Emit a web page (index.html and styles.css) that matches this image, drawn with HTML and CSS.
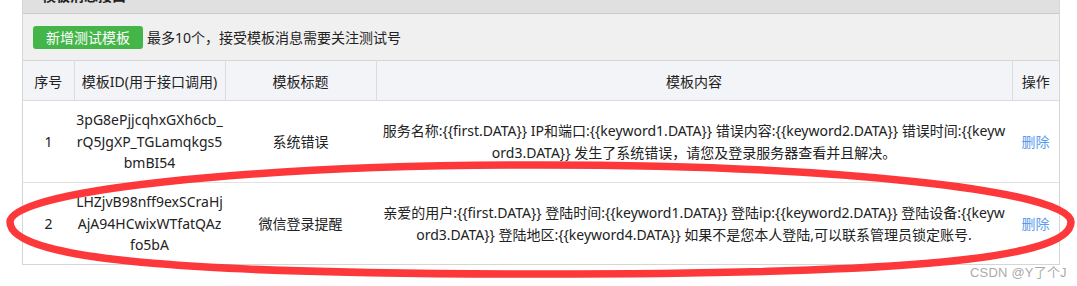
FILE: index.html
```html
<!DOCTYPE html>
<html lang="zh-CN">
<head>
<meta charset="utf-8">
<title>模板消息接口</title>
<link rel="stylesheet" href="styles.css">
</head>
<body>
<div class="page">
  <div class="panel">
    <div class="panel-title">模板消息接口</div>
    <div class="toolbar">
      <button class="btn-add" type="button">新增测试模板</button>
      <span class="tip">最多10个，接受模板消息需要关注测试号</span>
    </div>
    <table class="tpl-table">
      <colgroup>
        <col class="c-no">
        <col class="c-id">
        <col class="c-title">
        <col class="c-content">
        <col class="c-op">
      </colgroup>
      <thead>
        <tr>
          <th>序号</th>
          <th>模板ID(用于接口调用)</th>
          <th>模板标题</th>
          <th>模板内容</th>
          <th>操作</th>
        </tr>
      </thead>
      <tbody>
        <tr>
          <td>1</td>
          <td class="id">3pG8ePjjcqhxGXh6cb_<br>rQ5JgXP_TGLamqkgs5<br>bmBI54</td>
          <td>系统错误</td>
          <td class="content">服务名称:{{first.DATA}} IP和端口:{{keyword1.DATA}} 错误内容:{{keyword2.DATA}} 错误时间:{{keyw<br>ord3.DATA}} 发生了系统错误，请您及登录服务器查看并且解决。</td>
          <td><a class="del" href="#">删除</a></td>
        </tr>
        <tr>
          <td>2</td>
          <td class="id">LHZjvB98nff9exSCraHj<br>AjA94HCwixWTfatQAz<br>fo5bA</td>
          <td>微信登录提醒</td>
          <td class="content">亲爱的用户:{{first.DATA}} 登陆时间:{{keyword1.DATA}} 登陆ip:{{keyword2.DATA}} 登陆设备:{{keyw<br>ord3.DATA}} 登陆地区:{{keyword4.DATA}} 如果不是您本人登陆,可以联系管理员锁定账号.</td>
          <td><a class="del" href="#">删除</a></td>
        </tr>
      </tbody>
    </table>
  </div>

  <svg class="mark" width="1077" height="286" viewBox="0 0 1077 286">
    <path d="M10 222 C10 190.5 247.7 165 541 165 C834.3 165 1071 190.5 1071 222 C1071 263.6 859 274 541 274 C223 274 10 263.6 10 222 Z" fill="none" stroke="#fd383b" stroke-width="7.5"/>
  </svg>
  <div class="watermark">CSDN @Y了个J</div>
</div>
</body>
</html>
```

FILE: styles.css
```css
html, body {
  margin: 0;
  padding: 0;
  background: #ffffff;
}

body {
  font-family: "Noto Sans", "Noto Sans CJK SC", sans-serif;
  font-size: 14px;
  color: #333333;
  overflow: hidden;
}

.page {
  position: relative;
  width: 1077px;
  height: 286px;
  overflow: hidden;
}

.panel {
  box-sizing: border-box;
  width: 1038px;
  margin: -21px 0 0 22px;
  border: 1px solid #d6d6d6;
  border-top: none;
  background: #ffffff;
}

.panel-title {
  height: 34px;
  line-height: 34px;
  padding-left: 19px;
  background: #e0e0e0;
  border-bottom: 1px solid #cccccc;
  font-weight: bold;
  color: #222222;
}

.toolbar {
  display: flex;
  align-items: center;
  height: 46px;
  padding: 0 10px;
  background: #f0f0f0;
}

.btn-add {
  height: 23px;
  padding: 0 13px;
  margin-right: 4px;
  border: none;
  border-radius: 3px;
  background: #44b549;
  color: #ffffff;
  font-family: inherit;
  font-size: 14px;
  line-height: 23px;
}

.tip {
  color: #222222;
}

.tpl-table {
  width: 100%;
  table-layout: fixed;
  border-collapse: collapse;
}

.c-no { width: 51px; }
.c-id { width: 151px; }
.c-title { width: 151px; }
.c-content { width: 636px; }
.c-op { width: 47px; }

.tpl-table th {
  height: 39px;
  padding: 0;
  background: #f3f4f8;
  border: 1px solid #dcdcdc;
  border-top-color: #d6d6d6;
  font-weight: normal;
  color: #222222;
  text-align: center;
}

.tpl-table th:first-child { border-left: none; }
.tpl-table th:last-child { border-right: none; }

.tpl-table td {
  height: 81px;
  padding: 0 2px;
  border-bottom: 1px solid #e2e2e2;
  text-align: center;
  vertical-align: middle;
  line-height: 21.5px;
  color: #222222;
}

.tpl-table tbody tr:last-child td {
  border-bottom: none;
}

.tpl-table td.id,
.tpl-table td.content {
  word-break: break-all;
}

.del {
  color: #5b9bea;
  text-decoration: none;
}

.mark {
  position: absolute;
  left: 0;
  top: 0;
  pointer-events: none;
}

.watermark {
  position: absolute;
  left: 970px;
  top: 262px;
  font-family: "Liberation Sans", "Noto Sans CJK SC", sans-serif;
  font-size: 13px;
  color: rgba(140, 140, 140, 0.75);
  letter-spacing: 0.2px;
}
```
